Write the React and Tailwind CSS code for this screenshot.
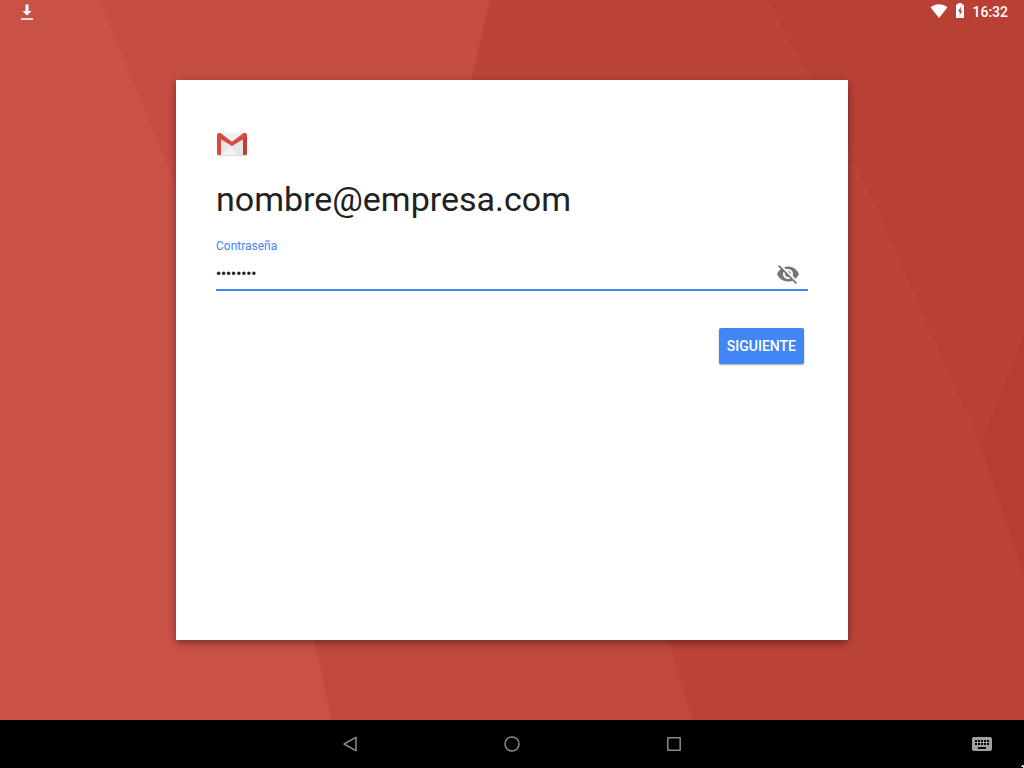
import React from 'react';
import { MdKeyboard, MdVisibility, MdVisibilityOff } from 'react-icons/md';

function Wallpaper() {
    return (
        <svg className="absolute inset-0 w-full h-full" viewBox="0 0 1024 768" preserveAspectRatio="none" aria-hidden="true">
            <rect width="1024" height="768" fill="#ca5145" />
            <path d="M100 0H600V300H223Z" fill="#c64d43" />
            <path d="M490 0H1024V768H706L692 720L668 640L414 320Z" fill="#bc4338" />
            <path d="M314 640L332 720L343 768H706L692 720L668 640L500 300L240 300Z" fill="#c1483d" />
            <path d="M767 0L811 80L848 149L900 260L940 353L981 445L1024 573V0Z" fill="#b94035" />
            <path d="M1024 335L981 445L1024 573Z" fill="#b63d33" />
        </svg>
    );
}

function StatusBar() {
    return (
        <header className="flex h-6 items-center justify-between pl-5 pr-4 text-white">
            <svg width="14" height="24" viewBox="0 0 14 24" fill="currentColor" aria-label="Descarga">
                <path d="M5.500 4.500H8.500V11H11.500L7 15.500L2.500 11H5.500Z" />
                <path d="M1 18H13V20H1Z" opacity="0.8" />
            </svg>
            <div className="flex items-center gap-2">
                <svg width="18" height="24" viewBox="0 0 18 24" fill="currentColor" aria-label="Wi-Fi">
                    <path d="M0.500 7.300C3 5.300 6 4.300 9 4.300S15 5.300 17.500 7.300L9 18Z" />
                </svg>
                <svg width="8" height="24" viewBox="0 0 8 24" fill="currentColor" aria-label="Batería">
                    <path fillRule="evenodd" d="M2 3H6V4.500H8V18H0V4.500H2ZM5 6.500L2 11.500H3.700V15.500L6.200 10.500H4.600Z" />
                </svg>
                <span className="text-sm font-medium">16:32</span>
            </div>
        </header>
    );
}

function GmailLogo() {
    return (
        <svg width="32" height="24" viewBox="0 0 32 24" role="img" aria-label="Gmail">
            <path d="M3 1H29V23H3Z" fill="#e6e6e6" />
            <path d="M3 1H29L16 10Z" fill="#f1f1f1" />
            <path d="M5 23L14 15L22 23Z" fill="#f3f3f3" />
            <path d="M1 3.500C1 1 3.500 0.200 5 1.500V23H2.500Q1 23 1 21.500Z" fill="#db4a3e" />
            <path d="M31 3.500C31 1 28.500 0.200 27 1.500V23H29.500Q31 23 31 21.500Z" fill="#c43b2f" />
            <path d="M1 3.500C1 1 3.500 0.200 5 1.500L16 9.700L27 1.500C28.500 0.200 31 1 31 3.500Q31 4.600 30 5.400L16 14L2 5.400Q1 4.600 1 3.500Z" fill="#db4a3e" />
            <path d="M2 23.500H30" stroke="#c9c9c9" strokeWidth="0.700" />
        </svg>
    );
}

function NavigationBar() {
    return (
        <nav className="relative flex h-12 items-center justify-center gap-[138px] bg-black text-[#8a8a8a]">
            <button type="button" aria-label="Atrás">
                <svg width="24" height="24" viewBox="0 0 24 24" fill="none" stroke="currentColor" strokeWidth="1.500" strokeLinejoin="round">
                    <path d="M18 5.300V18.700L6 12Z" />
                </svg>
            </button>
            <button type="button" aria-label="Inicio">
                <svg width="24" height="24" viewBox="0 0 24 24" fill="none" stroke="currentColor" strokeWidth="1.500">
                    <circle cx="12" cy="12" r="7" />
                </svg>
            </button>
            <button type="button" aria-label="Aplicaciones recientes">
                <svg width="24" height="24" viewBox="0 0 24 24" fill="none" stroke="currentColor" strokeWidth="1.500" strokeLinejoin="round">
                    <path d="M5.800 5.800H18.200V18.200H5.800Z" />
                </svg>
            </button>
            <button type="button" aria-label="Teclado" className="absolute right-[30px] top-3">
                <MdKeyboard size={24} color="#a0a0a0" />
            </button>
            {/* Pointer tip parked in the corner */}
            <svg className="absolute bottom-0 right-0" width="3" height="3" viewBox="0 0 3 3" fill="#cfcfcf" aria-hidden="true">
                <path d="M0 1H1V0H3V3H2V2H0Z" />
            </svg>
        </nav>
    );
}

export default function App() {
    const [password, setPassword] = React.useState('12345678');
    const [visible, setVisible] = React.useState(false);

    return (
        <div className="relative isolate flex min-h-screen flex-col font-['Roboto',sans-serif]">
            <div className="absolute inset-0 -z-10">
                <Wallpaper />
            </div>

            <StatusBar />

            <main className="flex flex-1 flex-col pt-14 pb-20">
                <form
                    onSubmit={(e) => e.preventDefault()}
                    className="mx-auto w-full max-w-2xl flex-1 bg-white px-10 pt-[52px] pb-10 shadow-[0_3px_8px_rgba(0,0,0,0.4)]"
                >
                    <GmailLogo />
                    <h1 className="mt-5 text-[34px] leading-[46px] text-[#212121]">nombre@empresa.com</h1>

                    <label htmlFor="password" className="mt-4 block text-xs leading-4 text-[#4285f4]">Contraseña</label>
                    <div className="flex h-[37px] items-center border-b-2 border-[#4285f4] pt-1 pr-2">
                        <input
                            id="password"
                            type={visible ? 'text' : 'password'}
                            value={password}
                            onChange={(e) => setPassword(e.target.value)}
                            className="min-w-0 flex-1 text-sm font-bold text-[#212121] outline-none"
                        />
                        <button
                            type="button"
                            aria-label={visible ? 'Ocultar contraseña' : 'Mostrar contraseña'}
                            onClick={() => setVisible(!visible)}
                        >
                            {visible ? <MdVisibility size={24} color="#757575" /> : <MdVisibilityOff size={24} color="#757575" />}
                        </button>
                    </div>

                    <div className="mt-[37px] flex justify-end pr-1">
                        <button
                            type="submit"
                            className="h-9 rounded-xs bg-[#4285f4] px-2 text-sm font-medium text-white shadow-[0_1px_2px_rgba(0,0,0,0.35)]"
                        >
                            SIGUIENTE
                        </button>
                    </div>
                </form>
            </main>

            <NavigationBar />
        </div>
    );
}
